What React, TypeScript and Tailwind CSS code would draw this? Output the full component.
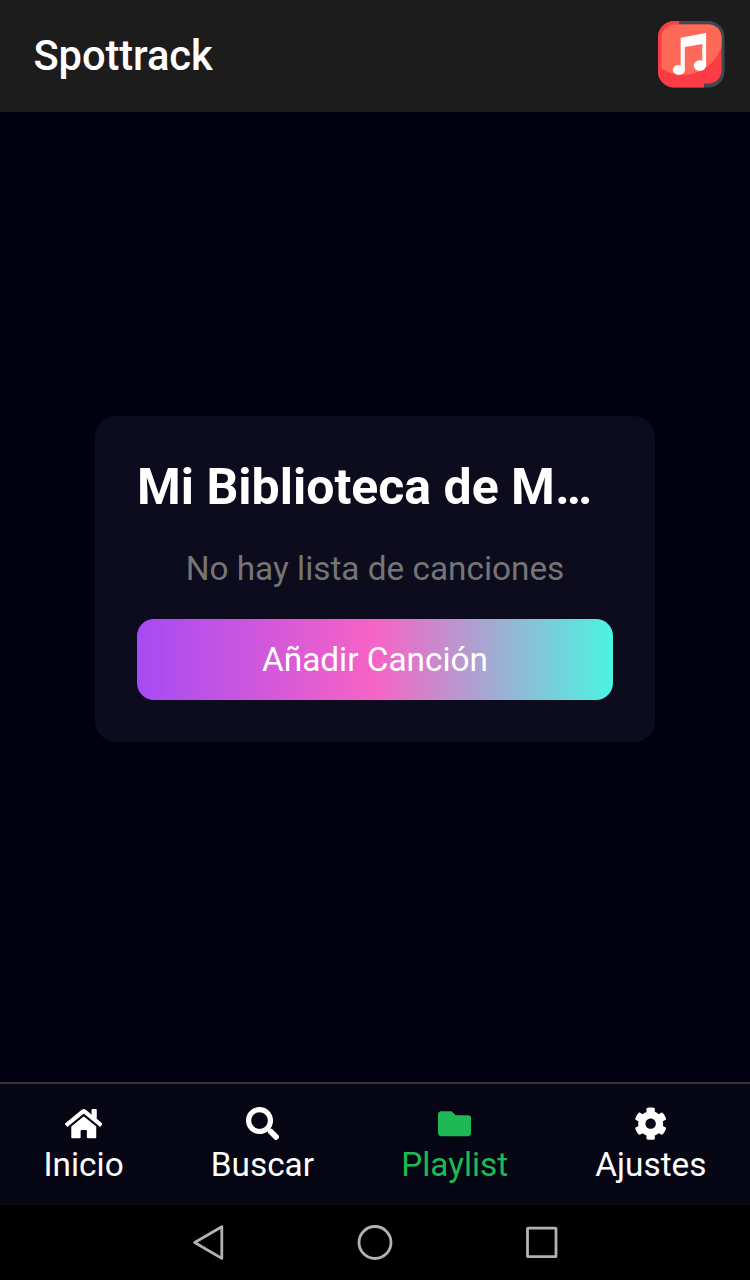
import { FaHome, FaSearch, FaFolder, FaCog } from "react-icons/fa";
import type { IconType } from "react-icons";

function Logo() {
  return (
    <svg className="h-[68px] w-[68px]" viewBox="0 0 68 68" aria-label="Spottrack">
      <defs>
        <clipPath id="logo-outer">
          <rect x="1" y="1" width="66.5" height="66.5" rx="16" />
        </clipPath>
        <clipPath id="logo-inner">
          <rect x="4.5" y="4.5" width="60" height="59" rx="13" />
        </clipPath>
      </defs>
      <g clipPath="url(#logo-outer)">
        <rect width="68" height="68" fill="#3e4952" />
        <path d="M0 0H22V30H47V68H0Z" fill="#fc3c45" />
      </g>
      <g clipPath="url(#logo-inner)">
        <rect width="68" height="68" fill="#fc3c45" />
        <ellipse cx="26" cy="12.5" rx="41" ry="42.5" fill="#ff6a58" />
      </g>
      <g fill="#fff">
        <path d="M23.7 17.8L49.1 13V46H45.3V24L27.8 27V50.5H23.7Z" />
        <ellipse cx="21.8" cy="50" rx="6" ry="5" />
        <ellipse cx="42.9" cy="45.5" rx="6.2" ry="5.2" />
      </g>
    </svg>
  );
}

interface NavItemProps {
  label: string;
  icon: IconType;
  iconWidth?: string;
  active?: boolean;
}

function NavItem({ label, icon: Icon, iconWidth = "w-[33.3px]", active = false }: NavItemProps) {
  return (
    <a
      href="#"
      className={`flex flex-col items-center ${active ? "text-[#1eb854]" : "text-white"}`}
    >
      <Icon className={`h-[33.3px] ${iconWidth}`} />
      <span className="text-[33.33px] leading-[50px]">{label}</span>
    </a>
  );
}

export default function App() {
  return (
    <div className="flex h-[1280px] w-[750px] flex-col overflow-hidden bg-[#010010] font-['Roboto',sans-serif] text-white">
      <header className="flex h-[112px] shrink-0 items-center justify-between bg-[#1c1c1c] pr-[25px] pl-[33.5px]">
        <h1 className="text-[41.67px] leading-[50px] font-medium tracking-[-0.1px]">Spottrack</h1>
        <div className="-mt-1">
          <Logo />
        </div>
      </header>

      <main className="flex flex-1 items-start justify-center pt-[304px]">
        <section className="flex h-[326px] w-[560px] flex-col rounded-[21px] bg-[#0c0c1e] px-[42px] pt-[41px]">
          <h2 className="truncate text-[50px] leading-[60px] font-bold">
            Mi Biblioteca de Música
          </h2>
          <p className="mt-[27px] text-center text-[33.33px] leading-[50px] text-[#757575]">
            No hay lista de canciones
          </p>
          <button className="mt-[25px] h-[81px] shrink-0 rounded-[17px] bg-[linear-gradient(90deg,#a64bf4,#f763c5,#4bf4e0)] text-[33.33px]">
            Añadir Canción
          </button>
        </section>
      </main>

      <nav className="flex h-[123px] shrink-0 justify-around border-t-2 border-[#333] bg-[#070615] pt-[23px]">
        <NavItem label="Inicio" icon={FaHome} iconWidth="w-[37.5px]" />
        <NavItem label="Buscar" icon={FaSearch} />
        <NavItem label="Playlist" icon={FaFolder} active />
        <NavItem label="Ajustes" icon={FaCog} />
      </nav>

      <footer className="flex h-[75px] shrink-0 justify-center bg-black">
        <svg
          className="h-[75px] w-[376px]"
          viewBox="0 0 376 75"
          fill="none"
          stroke="#b2b2b6"
          strokeWidth="2.8"
          strokeLinejoin="round"
        >
          <path d="M7.7 37.5L34.8 21.8V53.4Z" />
          <circle cx="188" cy="37.5" r="16" />
          <rect x="340.5" y="23.2" width="28.5" height="28.5" rx="0.5" />
        </svg>
      </footer>
    </div>
  );
}
